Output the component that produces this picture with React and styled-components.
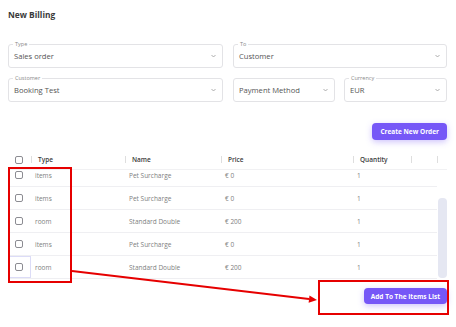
import React, { useLayoutEffect, useRef } from "react";
import styled, { createGlobalStyle } from "styled-components";

const Global = createGlobalStyle`
  html, body { margin: 0; padding: 0; background: #fff; }
  body { font-family: "Open Sans", "Liberation Sans", Arial, sans-serif; }
  * { box-sizing: border-box; }
`;

const Page = styled.div`
  position: relative;
  width: 456px;
  height: 327px;
  overflow: hidden;
  padding: 8px 9px 0 8px;
  background: #fff;
`;

const Title = styled.h1`
  margin: 0;
  font-size: 8.4px;
  line-height: 14px;
  font-weight: 700;
  color: #3a3a3a;
`;

const FormGrid = styled.div`
  margin-top: 22px;
  display: grid;
  grid-template-columns: 215px 214px;
  column-gap: 10px;
  row-gap: 10px;
`;

const SplitCell = styled.div`
  display: grid;
  grid-template-columns: 102px 103px;
  column-gap: 9px;
`;

const Field = styled.div`
  position: relative;
  height: 24px;
  border: 1px solid #e3e3e6;
  border-radius: 3px;
  display: flex;
  align-items: center;
  justify-content: space-between;
  padding: 0 6px 0 5px;
`;

const FieldLabel = styled.span`
  position: absolute;
  top: -4px;
  left: 4px;
  padding: 0 2px;
  background: #fff;
  font-size: 5.5px;
  line-height: 7px;
  color: #8a8a8a;
`;

const FieldValue = styled.span`
  font-size: 7.6px;
  color: #555;
`;

const Chevron = () => (
  <svg width="5" height="4" viewBox="0 0 5 4">
    <polyline points="0.5,1 2.5,3 4.5,1" fill="none" stroke="#9a9a9a" strokeWidth="0.8" />
  </svg>
);

const Select = ({ label, value }) => (
  <Field>
    {label && <FieldLabel>{label}</FieldLabel>}
    <FieldValue>{value}</FieldValue>
    <Chevron />
  </Field>
);

const ActionRow = styled.div`
  display: flex;
  justify-content: flex-end;
  margin-top: ${(p) => p.$top}px;
`;

const PrimaryButton = styled.button`
  height: ${(p) => p.$h}px;
  padding: 0 ${(p) => p.$px}px;
  border: none;
  border-radius: 4px;
  background: #7657f7;
  color: #fff;
  font-family: inherit;
  font-size: 6.5px;
  font-weight: 700;
  box-shadow: 0 2px 6px rgba(118, 87, 247, 0.35);
  white-space: nowrap;
`;

const HEAD_COLS = "23px 94px 96px 132px 58px 26px 10px";
const BODY_COLS = "23px 94px 96px 132px 58px 26px";

const HeaderRow = styled.div`
  margin-top: 10px;
  display: grid;
  grid-template-columns: ${HEAD_COLS};
  height: 20px;
  align-items: center;
  border-bottom: 1px solid #f1f1f3;
`;

const HeadCell = styled.div`
  position: relative;
  padding-left: 7px;
  font-size: 6.5px;
  font-weight: 600;
  color: #3d3d3d;
  &::before {
    content: "";
    position: absolute;
    left: 0;
    top: 50%;
    width: 1px;
    height: 7px;
    margin-top: -4px;
    background: #dedede;
  }
`;

const CheckCell = styled.div`
  display: flex;
  align-items: center;
  height: 100%;
  border: 1px solid ${(p) => (p.$focus ? "#dcdcf7" : "transparent")};
  border-left-width: ${(p) => (p.$focus ? "1px" : "0")};
  margin-left: ${(p) => (p.$focus ? "1px" : "0")};
  padding-left: ${(p) => (p.$focus ? "5px" : "7px")};
`;

const Box = styled.span`
  display: inline-block;
  width: 8px;
  height: 8px;
  border: 1.2px solid #8c8c92;
  border-radius: 2px;
  background: #fff;
`;

const BodyWrap = styled.div`
  position: relative;
  width: 439px;
`;

const BodyViewport = styled.div`
  width: 429px;
  height: 109px;
  overflow: hidden;
`;

const Row = styled.div`
  display: grid;
  grid-template-columns: ${BODY_COLS};
  height: 23px;
  align-items: center;
  border-bottom: 1px solid #efeff2;
`;

const Cell = styled.div`
  padding-left: 4px;
  font-size: 6.5px;
  color: #808080;
  white-space: nowrap;
`;

const Thumb = styled.div`
  position: absolute;
  right: 0;
  top: 28px;
  width: 9px;
  height: 80px;
  border-radius: 4px;
  background: #e5e7f2;
`;

const Highlight = styled.div`
  position: absolute;
  left: ${(p) => p.$x}px;
  top: ${(p) => p.$y}px;
  width: ${(p) => p.$w}px;
  height: ${(p) => p.$h}px;
  border: 2px solid #e60000;
  pointer-events: none;
`;

const Overlay = styled.svg`
  position: absolute;
  left: 0;
  top: 0;
  pointer-events: none;
`;

const rows = [
  ["items", "Pet Surcharge", "€ 0", "1"],
  ["items", "Pet Surcharge", "€ 0", "1"],
  ["room", "Standard Double", "€ 200", "1"],
  ["items", "Pet Surcharge", "€ 0", "1"],
  ["room", "Standard Double", "€ 200", "1"],
];

export default function App() {
  const vp = useRef(null);
  useLayoutEffect(() => {
    if (vp.current) vp.current.scrollTop = 6;
  }, []);

  return (
    <>
      <Global />
      <Page>
        <Title>New Billing</Title>
        <FormGrid>
          <Select label="Type" value="Sales order" />
          <Select label="To" value="Customer" />
          <Select label="Customer" value="Booking Test" />
          <SplitCell>
            <Select value="Payment Method" />
            <Select label="Currency" value="EUR" />
          </SplitCell>
        </FormGrid>

        <ActionRow $top={21}>
          <PrimaryButton $h={17} $px={8}>Create New Order</PrimaryButton>
        </ActionRow>

        <HeaderRow>
          <CheckCell>
            <Box />
          </CheckCell>
          <HeadCell>Type</HeadCell>
          <HeadCell>Name</HeadCell>
          <HeadCell>Price</HeadCell>
          <HeadCell>Quantity</HeadCell>
          <HeadCell />
          <HeadCell />
        </HeaderRow>

        <BodyWrap>
          <BodyViewport ref={vp}>
            {rows.map((r, i) => (
              <Row key={i}>
                <CheckCell $focus={i === 4}>
                  <Box />
                </CheckCell>
                <Cell>{r[0]}</Cell>
                <Cell>{r[1]}</Cell>
                <Cell>{r[2]}</Cell>
                <Cell>{r[3]}</Cell>
                <Cell />
              </Row>
            ))}
          </BodyViewport>
          <Thumb />
        </BodyWrap>

        <ActionRow $top={9}>
          <PrimaryButton $h={16} $px={7}>Add To The Items List</PrimaryButton>
        </ActionRow>

        <Highlight $x={8} $y={167} $w={64} $h={116} />
        <Highlight $x={318} $y={280} $w={131} $h={35} />
        <Overlay width="456" height="327" viewBox="0 0 456 327">
          <line x1="72" y1="271" x2="309" y2="299" stroke="#e60000" strokeWidth="2" />
          <polygon points="317,300 308.6,302.8 309.5,295.4" fill="#e60000" />
        </Overlay>
      </Page>
    </>
  );
}
